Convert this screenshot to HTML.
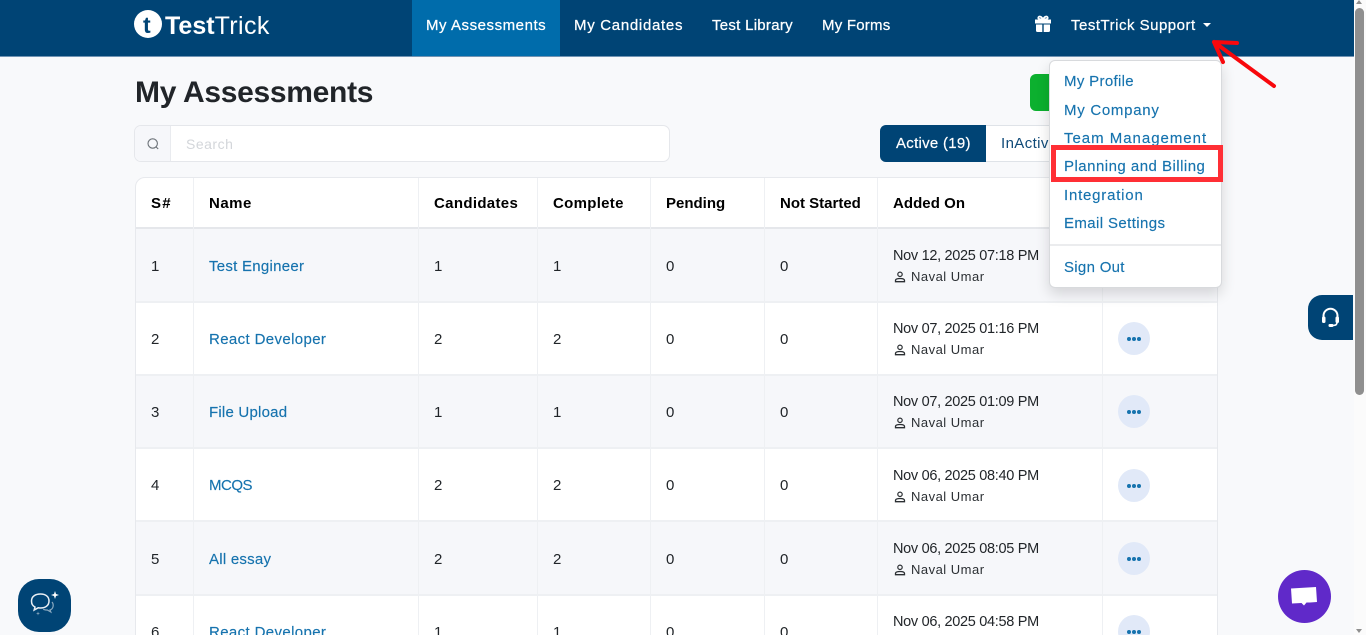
<!DOCTYPE html>
<html><head><meta charset="utf-8"><title>My Assessments</title>
<style>
*{box-sizing:border-box}
html,body{margin:0;padding:0;width:1366px;height:635px;overflow:hidden;background:#f8f9fb;font-family:"Liberation Sans",sans-serif;color:#212529}
#p{position:relative;width:1366px;height:635px;overflow:hidden;background:#f8f9fb}
.a{position:absolute}
.t{position:absolute;white-space:nowrap;line-height:20px;height:20px;font-size:15px;letter-spacing:.3px}
.d{font-size:14.5px;letter-spacing:-.31px;color:#212529}
.nav{color:#fff;font-size:15px;-webkit-text-stroke:.25px #fff}
.th{color:#000;font-weight:700;font-size:15px}
.lk{color:#1673ae;-webkit-text-stroke:.15px #1673ae}
.m{color:#1673ae;font-size:15px;-webkit-text-stroke:.15px #1673ae}
.s{font-size:13px;letter-spacing:.49px;color:#2b2f33}
.r{position:absolute;left:136px;width:1081px;border-bottom:2px solid #eef0f3}
.v{position:absolute;top:178px;width:1px;height:457px;background:#eef0f3}
.dots{position:absolute;left:1118px;width:32px;height:33px;border-radius:50%;background:#e1e9f8}
.dots i{position:absolute;top:15px;width:4px;height:4px;border-radius:50%;background:#1673ae}
</style></head><body><div id="p">

<div class="a" style="left:135px;top:177px;width:1083px;height:470px;background:#fff;border:1px solid #e7e9ed;border-radius:10px"></div>
<div class="a" style="left:136px;top:227px;width:1081px;height:2px;background:#e5e7eb"></div>

<div class="r" style="top:229px;height:74px;background:#f6f7fa"></div>
<div class="r" style="top:303px;height:73px;background:#fff"></div>
<div class="r" style="top:376px;height:73px;background:#f6f7fa"></div>
<div class="r" style="top:449px;height:73px;background:#fff"></div>
<div class="r" style="top:522px;height:74px;background:#f6f7fa"></div>
<div class="r" style="top:596px;height:40px;background:#fff;border:0"></div>

<div class="v" style="left:193px"></div><div class="v" style="left:418px"></div><div class="v" style="left:537px"></div><div class="v" style="left:650px"></div><div class="v" style="left:764px"></div><div class="v" style="left:877px"></div><div class="v" style="left:1102px"></div>

<!-- header -->
<div class="a" style="left:0;top:0;width:1354px;height:57px;background:#004475;border-bottom:1px solid #6f93b3"></div>
<div class="a" style="left:412px;top:0;width:148px;height:56px;background:#006cab"></div>
<div class="a" style="left:134px;top:10px;width:28px;height:28px;border-radius:50%;background:#fff"></div>
<div class="t" style="left:143px;top:12px;font-size:23px;line-height:26px;height:26px;font-weight:700;color:#004475;letter-spacing:0">t</div>
<div class="t" style="left:165px;top:12px;height:28px;line-height:28px;font-size:25px;color:#fff;letter-spacing:0"><b>Test</b><span style="letter-spacing:.4px">Trick</span></div>
<div class="t nav" style="left:426px;top:16px;letter-spacing:.55px">My Assessments</div>
<div class="t nav" style="left:574px;top:16px;letter-spacing:.7px">My Candidates</div>
<div class="t nav" style="left:712px;top:16px;letter-spacing:.28px">Test Library</div>
<div class="t nav" style="left:822px;top:16px;letter-spacing:.22px">My Forms</div>
<svg class="a" style="left:1034px;top:15px" width="18" height="18" viewBox="0 0 18 18"><path d="M1 4.500h16v4H1zM2 9.500h6.300V17H3.500a1.500 1.500 0 0 1-1.500-1.500zM9.700 9.500H16v6a1.500 1.500 0 0 1-1.500 1.500H9.700z" fill="#fff"/><path d="M9 4.500C7.500 1 4.500 .8 4.300 2.800 4.200 4.200 6.500 4.500 9 4.500zM9 4.500c1.500-3.500 4.500-3.700 4.700-1.700.1 1.400-2.200 1.700-4.700 1.700z" fill="none" stroke="#fff" stroke-width="1.800"/></svg>
<div class="t nav" style="left:1071px;top:16px;letter-spacing:.5px">TestTrick Support</div>
<div class="a" style="left:1203px;top:23px;width:0;height:0;border:4px solid transparent;border-top:4.500px solid #fff;border-bottom:0"></div>

<!-- title & search -->
<div class="t" style="left:135px;top:75px;height:36px;line-height:36px;font-size:30px;font-weight:700;letter-spacing:-.3px;color:#212529">My Assessments</div>
<div class="a" style="left:1030px;top:74px;width:40px;height:37px;background:#0cb02f;border-radius:6px"></div>
<div class="a" style="left:134px;top:125px;width:536px;height:37px;background:#fff;border:1px solid #e5e7eb;border-radius:7px;overflow:hidden"><div style="width:36px;height:100%;background:#f6f7fa;border-right:1px solid #e9ebef"></div></div>
<svg class="a" style="left:146px;top:137px" width="14" height="14" viewBox="0 0 14 14" fill="none" stroke="#6c7278" stroke-width="1.100"><circle cx="6.700" cy="6.500" r="4.700"/><path d="M10.200 10l2 2"/></svg>
<div class="t" style="left:186px;top:134px;color:#d3d6da;font-size:14px;letter-spacing:.5px">Search</div>

<!-- tabs -->
<div class="a" style="left:880px;top:125px;width:200px;height:37px;background:#fff;border:1px solid #dfe3e8;border-radius:6px"></div>
<div class="a" style="left:880px;top:125px;width:106px;height:37px;background:#004475;border-radius:6px 0 0 6px"></div>
<div class="t" style="left:896px;top:134px;color:#fff;letter-spacing:.28px;-webkit-text-stroke:.2px #fff">Active (19)</div>
<div class="t" style="left:1001px;top:134px;color:#0f4a78;letter-spacing:.4px">InActive</div>

<!-- table head -->
<div class="t th" style="left:151px;top:194px;letter-spacing:1.2px">S#</div>
<div class="t th" style="left:209px;top:194px;letter-spacing:.5px">Name</div>
<div class="t th" style="left:434px;top:194px;letter-spacing:.33px">Candidates</div>
<div class="t th" style="left:553px;top:194px;letter-spacing:.3px">Complete</div>
<div class="t th" style="left:666px;top:194px;letter-spacing:0">Pending</div>
<div class="t th" style="left:780px;top:194px;letter-spacing:0">Not Started</div>
<div class="t th" style="left:893px;top:194px;letter-spacing:.05px">Added On</div>

<!-- rows -->
<div class="t" style="left:151px;top:257px">1</div><div class="t lk" style="left:209px;top:257px;letter-spacing:.27px">Test Engineer</div><div class="t" style="left:434px;top:257px">1</div><div class="t" style="left:553px;top:257px">1</div><div class="t" style="left:666px;top:257px">0</div><div class="t" style="left:780px;top:257px">0</div>
<div class="t d" style="left:893px;top:246px">Nov 12, 2025 07:18 PM</div><div class="t s" style="left:911px;top:267px">Naval Umar</div>

<div class="t" style="left:151px;top:330px">2</div><div class="t lk" style="left:209px;top:330px;letter-spacing:.37px">React Developer</div><div class="t" style="left:434px;top:330px">2</div><div class="t" style="left:553px;top:330px">2</div><div class="t" style="left:666px;top:330px">0</div><div class="t" style="left:780px;top:330px">0</div>
<div class="t d" style="left:893px;top:319px">Nov 07, 2025 01:16 PM</div><div class="t s" style="left:911px;top:340px">Naval Umar</div>

<div class="t" style="left:151px;top:403px">3</div><div class="t lk" style="left:209px;top:403px;letter-spacing:.22px">File Upload</div><div class="t" style="left:434px;top:403px">1</div><div class="t" style="left:553px;top:403px">1</div><div class="t" style="left:666px;top:403px">0</div><div class="t" style="left:780px;top:403px">0</div>
<div class="t d" style="left:893px;top:392px">Nov 07, 2025 01:09 PM</div><div class="t s" style="left:911px;top:413px">Naval Umar</div>

<div class="t" style="left:151px;top:476px">4</div><div class="t lk" style="left:209px;top:476px;letter-spacing:-.5px">MCQS</div><div class="t" style="left:434px;top:476px">2</div><div class="t" style="left:553px;top:476px">2</div><div class="t" style="left:666px;top:476px">0</div><div class="t" style="left:780px;top:476px">0</div>
<div class="t d" style="left:893px;top:466px">Nov 06, 2025 08:40 PM</div><div class="t s" style="left:911px;top:487px">Naval Umar</div>

<div class="t" style="left:151px;top:550px">5</div><div class="t lk" style="left:209px;top:550px;letter-spacing:.25px">All essay</div><div class="t" style="left:434px;top:550px">2</div><div class="t" style="left:553px;top:550px">2</div><div class="t" style="left:666px;top:550px">0</div><div class="t" style="left:780px;top:550px">0</div>
<div class="t d" style="left:893px;top:539px">Nov 06, 2025 08:05 PM</div><div class="t s" style="left:911px;top:560px">Naval Umar</div>

<div class="t" style="left:151px;top:623px">6</div><div class="t lk" style="left:209px;top:623px;letter-spacing:.37px">React Developer</div><div class="t" style="left:434px;top:623px">1</div><div class="t" style="left:553px;top:623px">1</div><div class="t" style="left:666px;top:623px">0</div><div class="t" style="left:780px;top:623px">0</div>
<div class="t d" style="left:893px;top:612px">Nov 06, 2025 04:58 PM</div>

<!-- user icons -->
<svg width="0" height="0" style="position:absolute"><symbol id="u" viewBox="0 0 12 12"><circle cx="6" cy="3.300" r="2.200" fill="none" stroke="#2b2f33" stroke-width="1.200"/><path d="M1.500 10.700h9V9.500c0-1.300-2-2-4.500-2s-4.500.7-4.500 2z" fill="none" stroke="#2b2f33" stroke-width="1.300"/></symbol></svg>
<svg class="a" style="left:894px;top:271px" width="12" height="12"><use href="#u"/></svg>
<svg class="a" style="left:894px;top:344px" width="12" height="12"><use href="#u"/></svg>
<svg class="a" style="left:894px;top:417px" width="12" height="12"><use href="#u"/></svg>
<svg class="a" style="left:894px;top:491px" width="12" height="12"><use href="#u"/></svg>
<svg class="a" style="left:894px;top:564px" width="12" height="12"><use href="#u"/></svg>

<!-- dots -->
<div class="dots" style="top:322px"><i style="left:9px"></i><i style="left:14px"></i><i style="left:19px"></i></div>
<div class="dots" style="top:395px"><i style="left:9px"></i><i style="left:14px"></i><i style="left:19px"></i></div>
<div class="dots" style="top:469px"><i style="left:9px"></i><i style="left:14px"></i><i style="left:19px"></i></div>
<div class="dots" style="top:542px"><i style="left:9px"></i><i style="left:14px"></i><i style="left:19px"></i></div>
<div class="dots" style="top:615px"><i style="left:9px"></i><i style="left:14px"></i><i style="left:19px"></i></div>

<!-- dropdown -->
<div class="a" style="left:1049px;top:60px;width:173px;height:228px;background:#fff;border:1px solid #d8dadd;border-radius:6px;box-shadow:0 6px 14px rgba(0,0,0,.14)"></div>
<div class="t m" style="left:1064px;top:72px;letter-spacing:.33px">My Profile</div>
<div class="t m" style="left:1064px;top:101px;letter-spacing:.72px">My Company</div>
<div class="t m" style="left:1064px;top:129px;letter-spacing:.98px">Team Management</div>
<div class="a" style="left:1051px;top:145px;width:172px;height:37px;border:5px solid #ff2f35"></div>
<div class="t m" style="left:1064px;top:157px;letter-spacing:.48px">Planning and Billing</div>
<div class="t m" style="left:1064px;top:186px;letter-spacing:.79px">Integration</div>
<div class="t m" style="left:1064px;top:214px;letter-spacing:.39px">Email Settings</div>
<div class="a" style="left:1050px;top:244px;width:171px;height:2px;background:#ebecee"></div>
<div class="t m" style="left:1064px;top:258px;letter-spacing:.3px">Sign Out</div>

<!-- red arrow -->
<svg class="a" style="left:1205px;top:35px" width="80" height="60" viewBox="0 0 80 60" fill="none" stroke="#f8080c" stroke-width="4" stroke-linecap="round" stroke-linejoin="round"><path d="M9 7L69 51M9 7L18 27M9 7L32 8"/></svg>

<!-- support tab -->
<div class="a" style="left:1308px;top:295px;width:45px;height:45px;background:#004475;border-radius:14px 0 0 14px"></div>
<svg class="a" style="left:1320px;top:306px" width="21" height="22" viewBox="0 0 21 22" fill="none" stroke="#fff" stroke-width="2"><path d="M3.500 12V9.800a7 7 0 0 1 14 0V12"/><rect x="2" y="10.500" width="3.500" height="6.500" rx="1.500" fill="#fff" stroke="none"/><rect x="15.500" y="10.500" width="3.500" height="6.500" rx="1.500" fill="#fff" stroke="none"/><path d="M17 16.500c0 2-1.500 3-4 3" stroke-width="1.600"/><rect x="8.500" y="18" width="5" height="3" rx="1.200" fill="#fff" stroke="none"/></svg>

<!-- scrollbar -->
<div class="a" style="left:1354px;top:0;width:12px;height:635px;background:#fbfbfb"></div>
<div class="a" style="left:1355px;top:8px;width:9px;height:387px;background:#8f8f8f;border-radius:5px"></div>
<div class="a" style="left:1356px;top:0;width:0;height:0;border:3.500px solid transparent;border-bottom:4px solid #8f8f8f;border-top:0"></div>
<div class="a" style="left:1356px;top:629px;width:0;height:0;border:3.500px solid transparent;border-top:4px solid #8f8f8f;border-bottom:0"></div>

<!-- bottom left chat -->
<div class="a" style="left:18px;top:579px;width:53px;height:53px;background:#004475;border-radius:21px"></div>
<svg class="a" style="left:28px;top:589px" width="34" height="32" viewBox="0 0 34 32" fill="none" stroke="#e8eef4"><path d="M12.500 5c-5 0-9 2.300-9 7 0 3 1.300 5 3.500 6l-.8 3 4-2.200c1 .1 1.500.2 2.300.2 5 0 8.500-2.500 8.500-7s-3.500-7-8.500-7z" stroke-width="1.500"/><path d="M24 13c2 2.500 1.500 7-2 8l.8 2-3.500-2c-1.500 0-3-.1-4-.8" stroke-width="1.200" opacity=".6"/><path d="M27 2l1 3 3 1-3 1-1 3-1-3-3-1 3-1z" fill="#fff" stroke="none"/><path d="M10 22.500l.5 1.500 1.500.5-1.500.5-.5 1.500-.5-1.500-1.500-.5 1.500-.5z" fill="#fff" stroke="none" opacity=".5"/></svg>

<!-- bottom right chat -->
<div class="a" style="left:1278px;top:570px;width:53px;height:53px;border-radius:50%;background:#6029c9"></div>
<svg class="a" style="left:1290px;top:586px" width="28" height="24" viewBox="0 0 28 24"><path d="M1 2.500L26 1l1 15-7 .5h-3.500L14 19.500 11.500 17 2 17.500z" fill="#fff"/></svg>

</div></body></html>
